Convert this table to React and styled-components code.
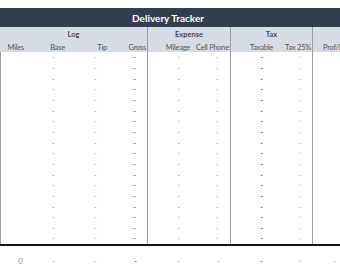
import styled, { createGlobalStyle } from 'styled-components';

const GlobalStyle = createGlobalStyle`
  html, body {
    margin: 0;
    padding: 0;
    background: #ffffff;
    font-family: 'Lato', 'Liberation Sans', sans-serif;
  }
`;

const columns = [
  { key: 'miles', label: 'Miles', width: 25 },
  { key: 'base', label: 'Base', width: 41 },
  { key: 'tip', label: 'Tip', width: 42 },
  { key: 'gross', label: 'Gross', width: 40, divider: true, strong: true },
  { key: 'mileage', label: 'Mileage', width: 43 },
  { key: 'phone', label: 'Cell Phone', width: 40, divider: true },
  { key: 'taxable', label: 'Taxable', width: 43, strong: true },
  { key: 'tax', label: 'Tax 25%', width: 39, divider: true },
  { key: 'profit', label: 'Prof/Loss', width: 35, lead: true },
];

const groups = [
  { label: 'Log', span: 4, divider: true },
  { label: 'Expense', span: 2, divider: true },
  { label: 'Tax', span: 2, divider: true },
  { label: '', span: 1 },
];

const template = columns.map((c) => `${c.width}px`).join(' ');
const ROWS = 18;

const Sheet = styled.div`
  width: 340px;
  padding-top: 8px;
  overflow: hidden;
`;

const Table = styled.div`
  width: 348px;
`;

const TitleBar = styled.div`
  width: 340px;
  height: 19px;
  background: #333f4f;
  color: #ffffff;
  font-weight: 700;
  font-size: 10px;
  display: flex;
  align-items: center;
  justify-content: center;
  padding-right: 4px;
  box-sizing: border-box;
`;

const Header = styled.div`
  background: #d6dce4;
  display: grid;
  grid-template-columns: ${template};
  grid-template-rows: 14px 11px;
`;

const GroupCell = styled.div`
  grid-column: span ${(p) => p.$span};
  display: flex;
  align-items: center;
  justify-content: center;
  font-size: 7.5px;
  font-weight: 700;
  color: #4a4a4a;
  border-right: ${(p) => (p.$divider ? '1px solid #9c9c9c' : 'none')};
`;

const ColCell = styled.div`
  display: flex;
  align-items: flex-end;
  justify-content: ${(p) => (p.$lead ? 'flex-start' : 'flex-end')};
  padding: ${(p) => (p.$lead ? '0 0 1px 10px' : '0 1px 1px 0')};
  font-size: 7.5px;
  line-height: 1;
  letter-spacing: -0.25px;
  color: #555555;
  white-space: nowrap;
  border-right: ${(p) => (p.$divider ? '1px solid #9c9c9c' : 'none')};
`;

const Body = styled.div`
  display: grid;
  grid-template-columns: ${template};
  grid-auto-rows: 10.667px;
  box-shadow: inset 1px 0 0 #9c9c9c;
  border-bottom: 2px solid #111111;
`;

const Cell = styled.div`
  display: flex;
  align-items: center;
  justify-content: flex-end;
  padding-right: ${(p) => (p.$number ? '2px' : '11px')};
  font-size: 8px;
  color: ${(p) => (p.$strong ? '#333333' : '#9a9a9a')};
  border-right: ${(p) => (p.$divider ? '1px solid #9c9c9c' : 'none')};
`;

const Totals = styled.div`
  display: grid;
  grid-template-columns: ${template};
  height: 11px;
  margin-top: 10px;
`;

export default function App() {
  const rows = Array.from({ length: ROWS }, (_, i) => i);

  return (
    <>
      <GlobalStyle />
      <Sheet>
        <TitleBar>Delivery Tracker</TitleBar>
        <Table>
          <Header>
            {groups.map((g, i) => (
              <GroupCell key={i} $span={g.span} $divider={g.divider}>
                {g.label}
              </GroupCell>
            ))}
            {columns.map((c) => (
              <ColCell key={c.key} $divider={c.divider} $lead={c.lead}>
                {c.label}
              </ColCell>
            ))}
          </Header>

          <Body>
            {rows.map((r) =>
              columns.map((c) => (
                <Cell key={`${r}-${c.key}`} $divider={c.divider} $strong={c.strong}>
                  {c.key === 'miles' || c.key === 'profit' ? '' : '-'}
                </Cell>
              ))
            )}
          </Body>

          <Totals>
            {columns.map((c) => (
              <Cell key={c.key} $number={c.key === 'miles'} $strong={c.strong}>
                {c.key === 'miles' ? '0' : '-'}
              </Cell>
            ))}
          </Totals>
        </Table>
      </Sheet>
    </>
  );
}
